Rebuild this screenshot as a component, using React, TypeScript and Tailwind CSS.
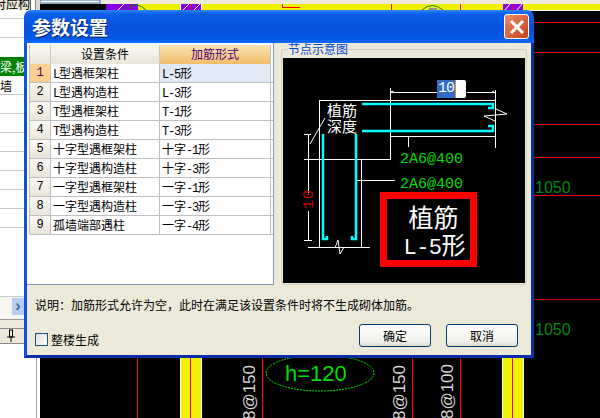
import React from 'react'

const rows = [
    ['L型遇框架柱', 'L-5形'],
    ['L型遇构造柱', 'L-3形'],
    ['T型遇框架柱', 'T-1形'],
    ['T型遇构造柱', 'T-3形'],
    ['十字型遇框架柱', '十字-1形'],
    ['十字型遇构造柱', '十字-3形'],
    ['一字型遇框架柱', '一字-1形'],
    ['一字型遇构造柱', '一字-3形'],
    ['孤墙端部遇柱', '一字-4形'],
]

// latin runs are narrower than the CJK cell, like the old bitmap UI font
function Mixed({ text }: { text: string }) {
    return (
        <>
            {text.split(/([\x00-\x7f]+)/).map((part, i) =>
                /[\x00-\x7f]/.test(part) ? (
                    <span key={i} className="font-['Liberation_Mono',monospace] text-[12px] tracking-[-1.2px]">
                        {part}
                    </span>
                ) : (
                    <span key={i}>{part}</span>
                )
            )}
        </>
    )
}

function Grid() {
    return (
        <div className="w-[247px] h-[242px] bg-white border-r border-b border-[#7f9db9] pl-[2px] pt-[2px] text-[12px] leading-[18px] text-black">
            <div className="flex h-[19px] border-l border-[#bfbfbf]">
                <div className="w-[21px] border-r border-[#c8c8c0] bg-[linear-gradient(#faf9f5,#e8e5d8)]" />
                <div className="w-[109px] text-center border-r border-[#c8c8c0] bg-[linear-gradient(#faf9f5,#e8e5d8)]">设置条件</div>
                <div className="w-[111px] text-center border-r border-[#bfbfbf] text-[#4b0082] bg-[linear-gradient(#fbe4b4,#f2bd6a)]">加筋形式</div>
            </div>
            {rows.map((row, i) => (
                <div key={i} className="flex h-[19px] border-l border-b border-[#bfbfbf]">
                    <div className={i === 0
                        ? "w-[21px] text-center border-r border-[#bfbfbf] bg-[#fdd08f] text-[#4b0082] font-['Liberation_Mono',monospace] text-[12px]"
                        : "w-[21px] text-center border-r border-[#bfbfbf] bg-[linear-gradient(#faf9f5,#e8e5d8)] font-['Liberation_Mono',monospace] text-[12px]"}>
                        {i + 1}
                    </div>
                    <div className="w-[109px] pl-[2px] whitespace-nowrap border-r border-[#bfbfbf]">
                        <Mixed text={row[0]} />
                    </div>
                    <div className={i === 0
                        ? "w-[111px] pl-[2px] whitespace-nowrap border-r border-[#bfbfbf] bg-[#dfe8f5]"
                        : "w-[111px] pl-[2px] whitespace-nowrap border-r border-[#bfbfbf]"}>
                        <Mixed text={row[1]} />
                    </div>
                </div>
            ))}
        </div>
    )
}

const whiteLines = [
    [390, 87, 390, 159],
    [495, 89, 495, 147],
    [390, 92, 437, 92],
    [467, 92, 495, 92],
    [319, 100, 495, 100],
    [319, 100, 319, 247],
    [304, 159, 390, 159],
    [390, 136, 495, 136],
    [408, 136, 408, 146],
    [304, 134, 311, 134],
    [308, 134, 308, 192],
    [308, 210, 308, 240],
    [304, 240, 312, 240],
    [361, 159, 361, 247],
    [357, 180, 395, 180],
    [308, 247, 370, 247],
]

function Diagram() {
    return (
        <svg viewBox="283 58 242 225" className="block w-[242px] h-[225px]">
            <g stroke="#fff" strokeWidth="1" shapeRendering="crispEdges">
                {whiteLines.map((l, i) => (
                    <line key={i} x1={l[0]} y1={l[1] + 0.5} x2={l[2]} y2={l[3] + 0.5} />
                ))}
            </g>
            <g stroke="#fff" strokeWidth="1" fill="none">
                <polyline points="496,109 507,114 484,116 495,121" />
                <line x1="310" y1="144" x2="325" y2="118" />
                <polyline points="335,248 338,240 340,254 344,247" />
                <polyline points="391,92 393,91 393,93" />
                <polyline points="494,91 492,92 494,93" />
            </g>
            <g stroke="#00ffff" strokeWidth="2.5" fill="none">
                <polyline points="362,104 493,104 493,108 488,108" />
                <polyline points="362,131 493,131 493,126 488,126" />
                <polyline points="323,134 323,239 327,239 327,236" />
                <polyline points="356,134 356,239 352,239 352,236" />
            </g>
            <g fill="#fff" fontSize="15" fontFamily="'Noto Sans CJK SC', sans-serif">
                <text x="327" y="116">植筋</text>
                <text x="327" y="132">深度</text>
            </g>
            <g fill="#00dc00" fontSize="15" fontFamily="'Liberation Mono', monospace">
                <text x="400" y="163">2A6@400</text>
                <text x="400" y="188">2A6@400</text>
            </g>
            <text transform="rotate(-90 313 209)" x="313" y="209" fill="#c00000" fontSize="15" letterSpacing="1" fontFamily="'Liberation Mono', monospace">10</text>
        </svg>
    )
}

function Canvas() {
    return (
        <svg viewBox="40 0 560 418" className="block w-[560px] h-[418px] bg-black">
            <rect x="40" y="0" width="560" height="4" fill="#ece9d8" />
            <rect x="40" y="0" width="60" height="3" fill="#fff" stroke="#3a6ea5" />
            <g shapeRendering="crispEdges">
                <rect x="106" y="4" width="32" height="6" fill="#8a00e6" />
                <rect x="138" y="4" width="42" height="6" fill="#f0f000" />
                <rect x="180" y="4" width="22" height="6" fill="#fff" />
                <rect x="181" y="4" width="20" height="6" fill="#8a00e6" />
                <rect x="202" y="4" width="301" height="6" fill="#f0f000" />
                <rect x="503" y="4" width="20" height="6" fill="#8a00e6" />
                <rect x="523" y="4" width="77" height="6" fill="#f0f000" />
                <rect x="523" y="10" width="77" height="1" fill="#fff" />
                <rect x="190" y="4" width="1" height="6" fill="#f00" />
                <rect x="391" y="4" width="1" height="6" fill="#f00" />
                <rect x="460" y="4" width="1" height="6" fill="#f00" />
                <rect x="512" y="4" width="1" height="6" fill="#f00" />
                <rect x="282" y="7" width="18" height="1" fill="#f00" />
                <rect x="282" y="4" width="1" height="3" fill="#f00" />
                {[22, 52, 124, 157, 195].map((y) => (
                    <rect key={y} x="534" y={y} width="66" height="1" fill="#f00" />
                ))}
                <rect x="534" y="299" width="66" height="1" fill="#d00000" />
                <rect x="137" y="358" width="1" height="60" fill="#f00" />
                <rect x="180" y="358" width="22" height="60" fill="#fff" />
                <rect x="181" y="358" width="20" height="60" fill="#f0f000" />
                <rect x="190" y="358" width="1" height="60" fill="#f00" />
                <rect x="262" y="358" width="1" height="60" fill="#f00" />
                <rect x="412" y="358" width="1" height="60" fill="#f00" />
                <rect x="460" y="358" width="1" height="60" fill="#f00" />
                <rect x="502" y="358" width="22" height="60" fill="#fff" />
                <rect x="503" y="358" width="20" height="60" fill="#f0f000" />
                <rect x="512" y="358" width="1" height="60" fill="#f00" />
            </g>
            <g stroke="#fff" strokeWidth="1">
                <line x1="118" y1="10" x2="124" y2="4" />
                <line x1="183" y1="10" x2="189" y2="4" />
                <line x1="194" y1="10" x2="200" y2="4" />
                <line x1="505" y1="10" x2="510" y2="4" />
                <line x1="517" y1="10" x2="522" y2="4" />
            </g>
            <path d="M125 10 Q131 4 137 5 Q142 6 146 10" fill="none" stroke="#008000" />
            <path d="M422 10 Q432 1 443 10" fill="none" stroke="#008000" />
            <rect x="429" y="8" width="8" height="2" fill="#9090a0" />
            <ellipse cx="320" cy="373" rx="54" ry="18" fill="none" stroke="#00e000" strokeDasharray="2 1" />
            <text x="285" y="381" fill="#00dc00" fontSize="22" fontFamily="'Liberation Sans', sans-serif">h=120</text>
            <g fill="#00880a" fontSize="16" fontFamily="'Liberation Sans', sans-serif">
                <text x="535" y="193">1050</text>
                <text x="535" y="335">1050</text>
            </g>
            <g fill="#d8d8d8" fontSize="17" fontFamily="'Liberation Sans', sans-serif" textAnchor="end">
                <text transform="rotate(-90 255 365)" x="255" y="365">18@150</text>
                <text transform="rotate(-90 405 365)" x="405" y="365">18@150</text>
                <text transform="rotate(-90 453 364)" x="453" y="364">18@100</text>
            </g>
        </svg>
    )
}

function LeftPanel() {
    return (
        <div className="w-10 h-[418px] shrink-0 flex flex-col bg-white text-[12px] text-black overflow-hidden">
            <div className="h-[10px] bg-[#ece9d8] flex">
                <div className="w-[31px] flex justify-end leading-[8px] whitespace-nowrap overflow-hidden border-r border-[#555]">
                    <span className="shrink-0">对应构</span>
                </div>
                <div className="w-[4px] bg-white" />
                <div className="flex-1 bg-[#d8d8d0] border-l border-[#888]" />
            </div>
            <div className="h-[9px] border-b border-[#c8c8c8]" />
            <div className="h-[19px] border-b border-[#c8c8c8]" />
            <div className="h-[19px]" />
            <div className="h-[19px] bg-[#008000] text-white leading-[19px] whitespace-nowrap overflow-hidden">梁,板</div>
            <div className="h-[19px] border-b border-[#c8c8c8] leading-[19px]">墙</div>
            {[0, 1, 2, 3, 4, 5, 6].map((i) => (
                <div key={i} className="h-[19px] border-b border-[#c8c8c8]" />
            ))}
            <div className="h-[68px]" />
            <div className="h-[23px] border-t border-[#c8c8c8] bg-[#f6f5f0] flex justify-end pr-[16px] pt-[1px]">
                <div className="w-[12px] h-[17px] bg-[#b8ccf0] text-[#44609a] text-[16px] leading-[15px] text-center font-bold font-['Liberation_Sans',sans-serif]">›</div>
            </div>
            <div className="h-[9px] bg-[#ece9d8] border-t border-[#999]" />
            <div className="h-[16px] bg-[#ece9d8] border-t border-b border-[#888] pl-[6px]">
                <svg viewBox="0 0 10 14" className="w-[10px] h-[14px]">
                    <path d="M3 1h4M3.5 1v7h3V1M1 8h8M5 8v5" stroke="#000" fill="none" />
                </svg>
            </div>
            <div className="flex-1 w-[37px] border-r border-[#8fa8c0]" />
        </div>
    )
}

function Dialog() {
    return (
        <div className="absolute left-6 top-[10px] w-[510px] h-[348px] flex flex-col font-['Noto_Sans_CJK_SC',sans-serif]">
            <div className="h-[33px] shrink-0 flex items-center justify-between rounded-t-[7px] bg-[linear-gradient(#2f86f8_0%,#0a5ee8_12%,#0650dc_55%,#0558e4_85%,#0a6cff_100%)]">
                <span className="pl-[8px] text-[19px] font-bold leading-[24px] text-white [text-shadow:1px_1px_#0a246a]">参数设置</span>
                <div className="mr-[5px] w-[25px] h-[25px] rounded-[3px] border border-white bg-[linear-gradient(135deg,#ea8a66,#c6411a)] flex items-center justify-center">
                    <svg viewBox="0 0 16 16" className="w-4 h-4">
                        <path d="M2 2 14 14M14 2 2 14" stroke="#fff" strokeWidth="3" />
                    </svg>
                </div>
            </div>
            <div className="flex-1 flex flex-col bg-[#ece9d8] border-l-[3px] border-r-[3px] border-b-[3px] border-l-[#0f52e6] border-r-[#0a2ea8] border-b-[#0a2ea8]">
                <div className="flex">
                    <Grid />
                    <div className="relative ml-[7px] mt-[6px] w-[246px] h-[236px] border border-[#d0d0bf] rounded-[3px] pt-[8px] pl-[1px]">
                        <span className="absolute left-[6px] -top-[7px] bg-[#ece9d8] text-[12px] leading-[12px] text-[#0046d5]">节点示意图</span>
                        <div className="relative w-[242px] h-[225px] bg-black">
                            <Diagram />
                            <div className="absolute left-[154px] top-[22px] w-[29px] h-[18px] flex rounded-[2px] overflow-hidden bg-white">
                                <div className="w-[19px] bg-[#316ac5] border-r border-[#e09030] text-center text-white text-[15px] leading-[18px] font-['Liberation_Mono',monospace] tracking-[-1px]">10</div>
                            </div>
                            <div className="absolute left-[97px] top-[134px] w-[97px] h-[75px] border-[7px] border-[#ff0000] flex flex-col items-center text-white">
                                <span className="ml-[10px] text-[25px] leading-[29px] mt-[3px]">植筋</span>
                                <span className="ml-[12px] text-[24px] leading-[28px] -mt-[1px] whitespace-nowrap">
                                    <span className="font-['Liberation_Mono',monospace] text-[22px] tracking-[-0.5px]">L-5</span>形
                                </span>
                            </div>
                        </div>
                    </div>
                </div>
                <p className="pl-[8px] mt-[14px] text-[12px] leading-[12px] text-black whitespace-nowrap">
                    {'说明\uFF1A加筋形式允许为空\uFF0C此时在满足该设置条件时将不生成砌体加筋。'}
                </p>
                <div className="flex justify-between mt-[13px] pl-[8px] pr-[13px] text-[12px] text-black">
                    <label className="flex items-center gap-[3px] h-[23px] mt-[4px]">
                        <span className="w-[13px] h-[13px] border border-[#1c5180] bg-[linear-gradient(135deg,#dcdcd7,#ffffff)]" />
                        整楼生成
                    </label>
                    <div className="flex gap-[15px]">
                        <button className="w-[72px] h-[23px] rounded-[3px] border border-[#003c74] bg-[linear-gradient(#ffffff,#f0f0ea_80%,#dcd8c8)]">确定</button>
                        <button className="w-[72px] h-[23px] rounded-[3px] border border-[#003c74] bg-[linear-gradient(#ffffff,#f0f0ea_80%,#dcd8c8)]">取消</button>
                    </div>
                </div>
            </div>
        </div>
    )
}

export default function App() {
    return (
        <div className="relative w-[600px] h-[418px] overflow-hidden flex font-['Noto_Sans_CJK_SC',sans-serif]">
            <LeftPanel />
            <Canvas />
            <Dialog />
        </div>
    )
}
